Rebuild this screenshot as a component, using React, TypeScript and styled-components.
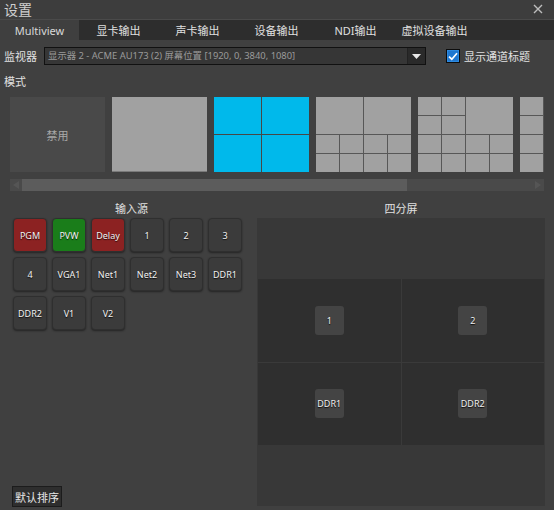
import React from 'react'
import styled, { createGlobalStyle } from 'styled-components'

const GlobalStyle = createGlobalStyle`
    html, body {
        margin: 0;
        padding: 0;
        background: #404040;
    }
    * {
        box-sizing: border-box;
    }
`;

const FONT = `"Noto Sans", "Noto Sans CJK SC", sans-serif`;

const tabs = ["Multiview", "显卡输出", "声卡输出", "设备输出", "NDI输出", "虚拟设备输出"];

type Tone = "red" | "green" | "plain";
const sources: { name: string; tone: Tone }[] = [
    { name: "PGM", tone: "red" },
    { name: "PVW", tone: "green" },
    { name: "Delay", tone: "red" },
    { name: "1", tone: "plain" },
    { name: "2", tone: "plain" },
    { name: "3", tone: "plain" },
    { name: "4", tone: "plain" },
    { name: "VGA1", tone: "plain" },
    { name: "Net1", tone: "plain" },
    { name: "Net2", tone: "plain" },
    { name: "Net3", tone: "plain" },
    { name: "DDR1", tone: "plain" },
    { name: "DDR2", tone: "plain" },
    { name: "V1", tone: "plain" },
    { name: "V2", tone: "plain" },
];

const quad = ["1", "2", "DDR1", "DDR2"];

// 各模式的格子 (col, row, colSpan, rowSpan) on a 4x4 grid
type Cell = [number, number, number, number];
const small = (c: number, r: number): Cell => [c, r, 1, 1];
const bottomEight: Cell[] = [1, 2, 3, 4].flatMap(c => [small(c, 3), small(c, 4)]);
const layouts: Cell[][] = [
    [[1, 1, 2, 2], [3, 1, 2, 2], ...bottomEight],
    [small(1, 1), small(2, 1), small(1, 2), small(2, 2), [3, 1, 2, 2], ...bottomEight],
    [1, 2, 3, 4].flatMap(r => [1, 2, 3, 4].map(c => small(c, r))),
];

export default function App() {
    return (
        <>
            <GlobalStyle />
            <Window>
                <TitleBar>
                    <TitleText>设置</TitleText>
                    <CloseIcon width="10" height="10" viewBox="0 0 10 10">
                        <path d="M1 1 L9 9 M9 1 L1 9" stroke="#bdbdbd" strokeWidth="1.4" />
                    </CloseIcon>
                </TitleBar>

                <TabBar>
                    {tabs.map((t, i) => (
                        <Tab key={t} active={i === 0}>{t}</Tab>
                    ))}
                </TabBar>

                <MonitorRow>
                    <Label>监视器</Label>
                    <Combo>
                        <ComboText>显示器 2 - ACME AU173 (2) 屏幕位置 [1920, 0, 3840, 1080]</ComboText>
                        <ComboArrow>
                            <svg width="9" height="5" viewBox="0 0 9 5">
                                <path d="M0 0 H9 L4.5 5 Z" fill="#e8e8e8" />
                            </svg>
                        </ComboArrow>
                    </Combo>
                    <CheckWrap>
                        <CheckBox>
                            <svg width="10" height="9" viewBox="0 0 10 9">
                                <path d="M1 4.6 L3.8 7.2 L9 1.2" stroke="#fff" strokeWidth="1.7" fill="none" />
                            </svg>
                        </CheckBox>
                        <CheckLabel>显示通道标题</CheckLabel>
                    </CheckWrap>
                </MonitorRow>

                <ModeLabel>模式</ModeLabel>

                <Strip>
                    <DisabledTile>禁用</DisabledTile>
                    <SingleTile />
                    <QuadTile>
                        <BlueCell /><BlueCell /><BlueCell /><BlueCell />
                    </QuadTile>
                    {layouts.map((cells, i) => (
                        <GridTile key={i}>
                            {cells.map(([c, r, cs, rs], j) => (
                                <GrayCell
                                    key={j}
                                    style={{ gridColumn: `${c} / span ${cs}`, gridRow: `${r} / span ${rs}` }}
                                />
                            ))}
                        </GridTile>
                    ))}
                </Strip>

                <ScrollBar>
                    <ScrollArrow>
                        <svg width="6" height="8" viewBox="0 0 6 8"><path d="M6 0 V8 L0 4 Z" fill="#555" /></svg>
                    </ScrollArrow>
                    <ScrollTrack>
                        <ScrollThumb />
                    </ScrollTrack>
                    <ScrollArrow>
                        <svg width="6" height="8" viewBox="0 0 6 8"><path d="M0 0 V8 L6 4 Z" fill="#555" /></svg>
                    </ScrollArrow>
                </ScrollBar>

                <Lower>
                    <SourcePanel>
                        <PanelTitle>输入源</PanelTitle>
                        <SourceGrid>
                            {sources.map(s => (
                                <SourceButton key={s.name} tone={s.tone}>{s.name}</SourceButton>
                            ))}
                        </SourceGrid>
                        <DefaultButton>默认排序</DefaultButton>
                    </SourcePanel>

                    <PreviewPanel>
                        <PanelTitle>四分屏</PanelTitle>
                        <PreviewBox>
                            <QuadGrid>
                                {quad.map(q => (
                                    <QuadCell key={q}>
                                        <QuadButton>{q}</QuadButton>
                                    </QuadCell>
                                ))}
                            </QuadGrid>
                        </PreviewBox>
                    </PreviewPanel>
                </Lower>
            </Window>
        </>
    )
}

const Window = styled.div`
    width: 554px;
    height: 510px;
    display: flex;
    flex-direction: column;
    background: #404040;
    font-family: ${FONT};
    color: #e6e6e6;
    overflow: hidden;
`;

const TitleBar = styled.div`
    height: 20px;
    display: flex;
    align-items: center;
    justify-content: space-between;
    padding: 0 11px 0 4px;
    background: #3d3d3d;
    border-bottom: 1px solid #4a4a4a;
`;

const TitleText = styled.span`
    font-size: 14px;
    line-height: 18px;
    color: #cfcfcf;
`;

const CloseIcon = styled.svg`
    display: block;
    margin-top: -1px;
`;

const TabBar = styled.div`
    height: 20px;
    display: flex;
    background: #2d2d2d;
`;

const Tab = styled.div<{ active: boolean }>`
    width: 79px;
    display: flex;
    align-items: center;
    justify-content: center;
    font-size: 11px;
    color: ${({ active }) => (active ? "#d8d8d8" : "#e0e0e0")};
    background: ${({ active }) => (active ? "#3f3f3f" : "transparent")};
`;

const MonitorRow = styled.div`
    display: flex;
    align-items: center;
    height: 18px;
    margin-top: 7px;
    padding-left: 4px;
`;

const Label = styled.span`
    width: 40px;
    font-size: 11px;
    color: #e0e0e0;
`;

const Combo = styled.div`
    width: 382px;
    height: 18px;
    display: flex;
    background: #363636;
    border: 1px solid #111;
`;

const ComboText = styled.div`
    flex: 1;
    padding-left: 3px;
    font-size: 9.4px;
    line-height: 16px;
    color: #9a9a9a;
    white-space: nowrap;
    overflow: hidden;
`;

const ComboArrow = styled.div`
    width: 18px;
    display: flex;
    align-items: center;
    justify-content: center;
    background: #2a2a2a;
    border-left: 1px solid #222;
`;

const CheckWrap = styled.div`
    display: flex;
    align-items: center;
    margin-left: 20px;
    gap: 4px;
`;

const CheckBox = styled.div`
    width: 14px;
    height: 14px;
    display: flex;
    align-items: center;
    justify-content: center;
    background: #1f77cf;
    border: 1px solid #0d0d0d;
    box-shadow: inset 0 0 0 1px #2d8ae0;
`;

const CheckLabel = styled.span`
    font-size: 11px;
    color: #e0e0e0;
`;

const ModeLabel = styled.div`
    height: 18px;
    margin-top: 8px;
    padding-left: 4px;
    font-size: 11px;
    line-height: 18px;
    color: #e0e0e0;
`;

const Strip = styled.div`
    display: flex;
    gap: 7px;
    width: 534px;
    height: 75px;
    margin: 6px 0 0 10px;
    overflow: hidden;
`;

const Tile = styled.div`
    flex: 0 0 95px;
    height: 75px;
`;

const DisabledTile = styled(Tile)`
    display: flex;
    align-items: center;
    justify-content: center;
    background: #494949;
    font-size: 11px;
    color: #a8a8a8;
`;

const SingleTile = styled(Tile)`
    background: #a1a1a1;
    border-bottom: 1px solid #7a7a7a;
`;

const QuadTile = styled(Tile)`
    display: grid;
    grid-template-columns: 1fr 1fr;
    grid-template-rows: 1fr 1fr;
    gap: 1px;
    background: #474747;
`;

const BlueCell = styled.div`
    background: #00b9eb;
`;

const GridTile = styled(Tile)`
    display: grid;
    grid-template-columns: repeat(4, 1fr);
    grid-template-rows: repeat(4, 1fr);
    gap: 1px;
    background: #575757;
`;

const GrayCell = styled.div`
    background: #a1a1a1;
`;

const ScrollBar = styled.div`
    display: flex;
    width: 534px;
    height: 12px;
    margin: 7px 0 0 10px;
    background: #4a4a4a;
`;

const ScrollArrow = styled.div`
    width: 12px;
    display: flex;
    align-items: center;
    justify-content: center;
`;

const ScrollTrack = styled.div`
    flex: 1;
    display: flex;
`;

const ScrollThumb = styled.div`
    width: 385px;
    background: #5c5c5c;
`;

const Lower = styled.div`
    flex: 1;
    display: flex;
    margin-top: 8px;
`;

const SourcePanel = styled.div`
    width: 250px;
    display: flex;
    flex-direction: column;
    padding: 0 0 3px 13px;
`;

const PanelTitle = styled.div`
    height: 19px;
    text-align: center;
    font-size: 11px;
    line-height: 19px;
    color: #e0e0e0;
`;

const SourceGrid = styled.div`
    display: grid;
    grid-template-columns: repeat(6, 34px);
    grid-auto-rows: 34px;
    column-gap: 5px;
    row-gap: 5px;
    width: 230px;
`;

const toneColors: Record<Tone, string> = {
    red: "#8c2222",
    green: "#1a7d1a",
    plain: "#3b3b3b",
};

const SourceButton = styled.div<{ tone: Tone }>`
    display: flex;
    align-items: center;
    justify-content: center;
    background: ${({ tone }) => toneColors[tone]};
    border: 1px solid #2f2f2f;
    border-radius: 4px;
    box-shadow: 0 1px 2px rgba(0, 0, 0, 0.45);
    font-size: 9px;
    color: #f2f2f2;
    text-shadow: 0 1px 1px rgba(0, 0, 0, 0.8);
`;

const DefaultButton = styled.div`
    margin-top: auto;
    margin-left: -1px;
    width: 50px;
    height: 21px;
    display: flex;
    align-items: center;
    justify-content: center;
    background: #2e2e2e;
    border: 1px solid #1c1c1c;
    font-size: 11px;
    color: #e6e6e6;
`;

const PreviewPanel = styled.div`
    width: 304px;
    display: flex;
    flex-direction: column;
    padding: 0 9px 4px 7px;
`;

const PreviewBox = styled.div`
    height: 288px;
    display: flex;
    align-items: center;
    padding: 0 1px;
    background: #383838;
`;

const QuadGrid = styled.div`
    flex: 1;
    height: 166px;
    display: grid;
    grid-template-columns: 1fr 1fr;
    grid-template-rows: 1fr 1fr;
    gap: 1px;
    background: #3a3a3a;
`;

const QuadCell = styled.div`
    display: flex;
    align-items: center;
    justify-content: center;
    background: #2f2f2f;
`;

const QuadButton = styled.div`
    width: 29px;
    height: 29px;
    display: flex;
    align-items: center;
    justify-content: center;
    background: #444;
    border-radius: 3px;
    font-size: 9px;
    color: #f0f0f0;
    text-shadow: 0 1px 1px rgba(0, 0, 0, 0.9);
`;
